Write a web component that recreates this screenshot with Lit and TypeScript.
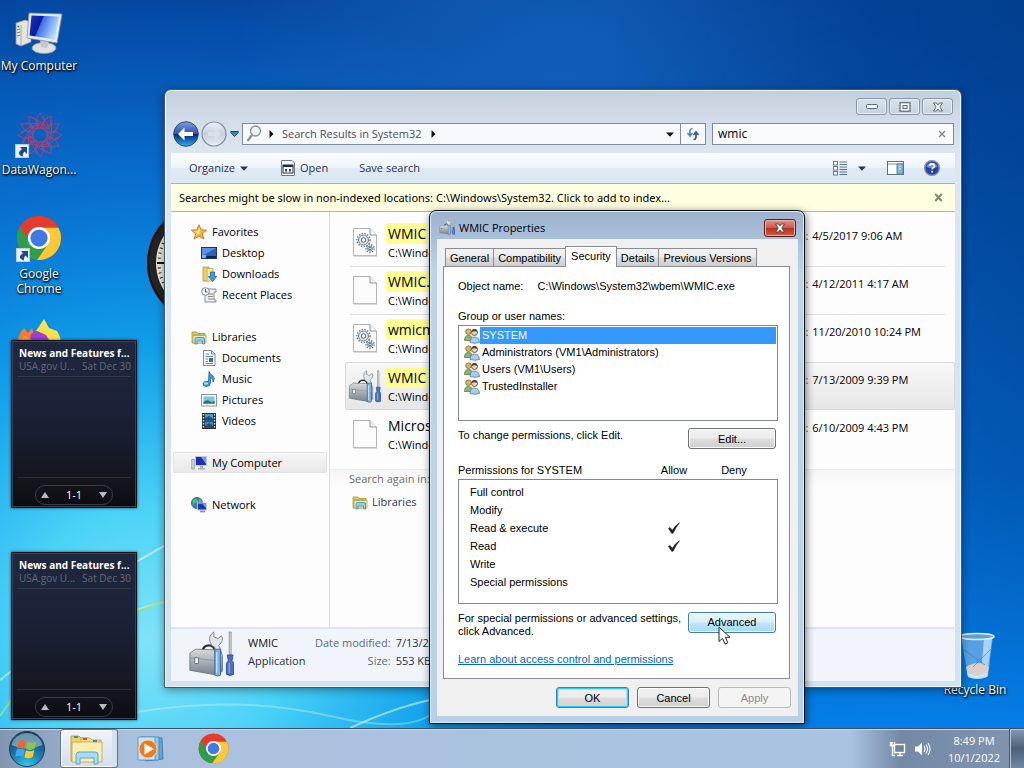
import { LitElement, html, svg, css, nothing } from "lit";
import type { TemplateResult } from "lit";
import { customElement, property } from "lit/decorators.js";
import { classMap } from "lit/directives/class-map.js";

/* ---------- shared styles ---------- */

const base = css`
  * { box-sizing: border-box; }
  :host { font-family: "Open Sans", "Noto Sans", sans-serif; font-size: 11px; line-height: 16px; color: #000; }
  button { font: inherit; color: inherit; padding: 0; margin: 0; border: 0; background: none; }
  input { font: inherit; color: inherit; padding: 0; margin: 0; border: 0; background: none; outline: 0; }
  ul { list-style: none; margin: 0; padding: 0; }
  svg { display: block; flex: none; }
`;

/* ---------- icons ---------- */

const icon = (w: number, h: number, box: string, body: unknown) =>
  html`<svg width=${w} height=${h} viewBox=${box} aria-hidden="true">${body}</svg>`;

const chromeIcon = (s: number) => icon(s, s, "0 0 48 48", svg`
  <circle cx="24" cy="24" r="23" fill="#e33b2e"/>
  <path d="M24 24 4.1 12.5A23 23 0 0 0 22 46.9L34 29.8Z" fill="#2f9e4b"/>
  <path d="M24 13H44.2A23 23 0 0 1 22 46.9L34 29.8Z" fill="#fcc934"/>
  <path d="M4.1 12.5A23 23 0 0 1 44.2 13H24L13.5 26Z" fill="#e33b2e"/>
  <circle cx="24" cy="24" r="11.6" fill="#fff"/><circle cx="24" cy="24" r="9" fill="#3f79e6"/>`);

const computerIcon = icon(48, 48, "0 0 48 48", svg`
  <defs><linearGradient id="scr" x1="0" y1="0" x2="1" y2=".35"><stop offset="0" stop-color="#1a35c8"/><stop offset=".42" stop-color="#0a1a9c"/><stop offset=".46" stop-color="#3f6fe6"/><stop offset="1" stop-color="#b7dcff"/></linearGradient></defs>
  <path d="M1 16 10 13 16 15 16 35 6 39 1 37Z" fill="#e4e4e0" stroke="#8d8f92" stroke-width=".8"/>
  <path d="M6 18V39" stroke="#a9aaa8"/><circle cx="3.4" cy="19.500" r="1" fill="#3b8f3a"/>
  <path d="M2 23 5 22M2 26 5 25M2 29 5 28" stroke="#777"/>
  <ellipse cx="29" cy="41" rx="12" ry="5.500" fill="#dfe1e3" stroke="#8e9296" stroke-width=".8"/>
  <path d="M25 33 34 34 32 41 26 40Z" fill="#c3c8cc"/>
  <path d="M14 6 47 7 42 36 12 31Z" fill="#e9ebec" stroke="#8d9296" stroke-width=".8"/>
  <path d="M16.500 8.500 44 9.500 40 32.500 14.500 28.500Z" fill="url(#scr)"/>`);

const dataWagonIcon = icon(48, 48, "0 0 48 48", svg`
  <g fill="none" stroke="#b8406e" stroke-width=".9" opacity=".9">
  ${Array.from({ length: 12 }, (_, i) => svg`<g transform=${`rotate(${i * 30} 25 24)`}><path d="M25 2 30 11 24 17 21 9Z"/><path d="M18 6 30 14 25 17M27 11 34 18"/></g>`)}
  <circle cx="25" cy="24" r="7"/></g>`);

const firefoxIcon = icon(48, 48, "0 0 48 48", svg`
  <path d="M2 24Q4 14 9 9L13 14 17 9 19 16 32 18 31 34H4Z" fill="#ff7a2a"/>
  <path d="M21 12 29 0 34 9 42 12Q46 18 46 26H34Z" fill="#ffe14a"/>
  <path d="M16 15 22 12 31 16 36 24 14 26Z" fill="#9c3fd6"/>
  <path d="M3 22 10 17 24 25 46 22 42 40H8Z" fill="#ff9f22"/>`);

const binIcon = icon(48, 48, "0 0 48 48", svg`
  <path d="M10 5H42L37 46H17Z" fill="#9cc6ee" fill-opacity=".55"/>
  <path d="M33 8 41 8 36 44 30 42Z" fill="#e2f1fd" fill-opacity=".6"/>
  <path d="M15 36Q27 28 38 36L36 45Q26 49 17 45Z" fill="#d9cfc6"/>
  <path d="M16 41Q26 47 37 41L36 46Q26 50 17 46Z" fill="#c9e2f5"/>
  <path d="M12 18 34 34M40 18 22 36" stroke="#3f78b9" stroke-width="1" opacity=".6"/>
  <ellipse cx="26" cy="5.500" rx="17" ry="3" fill="#5f9fd8" stroke="#d8ecfb" stroke-width="1.600"/>`);

const shortcutArrow = icon(14, 14, "0 0 14 14", svg`
  <rect x=".5" y=".5" width="13" height="13" fill="#e9f2fa" stroke="#b9cde0"/>
  <path d="M5 3H12V10L9.500 7.500Q7.500 9 8 12.500Q3.500 11.500 4 8.500Q4.500 6.500 7 5.200Z" fill="#1f4a8a"/>`);

const toolbox = (w: number, h: number) => icon(w, h, "0 0 48 48", svg`
  <defs><linearGradient id="tb" x1="0" y1="0" x2="0" y2="1"><stop offset="0" stop-color="#d6dbd9"/><stop offset="1" stop-color="#76828a"/></linearGradient></defs>
  <path d="M15 21Q16 15 22 15Q27 15 28 21" fill="none" stroke="#2b2f33" stroke-width="2.200"/>
  <path d="M2 23 8 19 34 20 36 26 36 42 30 46 2 41Z" fill="url(#tb)" stroke="#69747a" stroke-width=".9"/>
  <path d="M2 28 30 31 36 27M30 31V46" fill="none" stroke="#8d979b"/>
  <rect x="7" y="28" width="4" height="6" fill="#eceeee" stroke="#59636a" stroke-width=".8"/>
  <path d="M23 11Q21 5 27 1L27 6 31 8 35 5Q38 10 32 15L34 19V24H28V17Q24 16 23 11Z" fill="#e1e5e7" stroke="#717a81" stroke-width=".9"/>
  <path d="M28 19H34V46Q31 48 28 46Z" fill="#7fb0e2" stroke="#2b5e9c" stroke-width=".9"/><path d="M30 22V44" stroke="#d8ebfb" stroke-width="1.200"/>
  <path d="M43 1H45V25H43Z" fill="#d6dadd" stroke="#7f878c" stroke-width=".8"/>
  <path d="M41 25H47L46 31 48 34V45Q44 48 40 45V34L42 31Z" fill="#4b6fc4" stroke="#26417f" stroke-width=".8"/><path d="M43 33V44" stroke="#a9c0ee"/>`);

const gear = (cx: number, cy: number, r: number) => svg`
  <circle cx=${cx} cy=${cy} r=${r} fill="#dbe6ef" stroke="#6f8193" stroke-width="1"/>
  <circle cx=${cx} cy=${cy} r=${r + 1.5} fill="none" stroke="#66788b" stroke-width="1.500" stroke-dasharray="1.300 1.500"/>
  <circle cx=${cx} cy=${cy} r=${r * 0.45} fill="#fff" stroke="#55677a" stroke-width="1"/>`;

const pageIcon = (gears: boolean) => icon(24, 30, "0 0 24 30", svg`
  <path d="M.5 1.500H17L23.500 8V28.500H.5Z" fill="#fcfcfc" stroke="#b2b5b8"/>
  <path d="M17 1.500V8H23.500" fill="#f2f3f4" stroke="#8f9295"/>
  <path d="M1 29.300H24" stroke="#cfd1d3"/>
  ${gears ? svg`${gear(10.5, 13, 5)}${gear(17, 21.5, 2.5)}` : nothing}`);

const folder = svg`
  <path d="M1 3H6L7 4.500H14V14H1Z" fill="#e8c85e" stroke="#b8922c" stroke-width=".8"/>
  <path d="M2 6H15V14H2Z" fill="#f8e79c" stroke="#c5a443" stroke-width=".8"/>`;
const small: Record<string, TemplateResult> = {
  star: icon(16, 16, "0 0 16 16", svg`<path d="M8 .8 10 5.800 15.500 6.200 11.300 9.700 12.800 15 8 12 3.200 15 4.700 9.700 .5 6.200 6 5.800Z" fill="#fbb63a" stroke="#d9761b"/><path d="M8 3 9.200 7 8 10 4.500 12 5.800 9.300 3 7 6.800 6.800Z" fill="#ffe28a"/>`),
  desktop: icon(16, 16, "0 0 16 16", svg`<rect x=".5" y="2.500" width="15" height="11" fill="#2a63c4" stroke="#16386e"/><path d="M1 3H15L1 11Z" fill="#5b93e2"/><rect x="1" y="11" width="14" height="2" fill="#10264e"/><rect x="1" y="10" width="4" height="3" fill="#72b5ee"/>`),
  downloads: icon(16, 16, "0 0 16 16", svg`<path d="M2 1H8V15H2Z" fill="#edcf70" stroke="#b6922f" stroke-width=".8"/><path d="M6 2.500H12V15H6Z" fill="#f8e9a7" stroke="#c4a346" stroke-width=".8"/><path d="M9.500 6H13.500V10.500H15.700L11.500 15.500 7.300 10.500H9.500Z" fill="#3f9be6" stroke="#1b5fa6" stroke-width=".8"/>`),
  recent: icon(16, 16, "0 0 16 16", svg`<path d="M5 2H15V5H13V13H15V15H4V8" fill="#eceeef" stroke="#8b9196"/><path d="M7 7H12M7 9.500H12M7 12H12" stroke="#7f8a93"/><circle cx="4.500" cy="4.500" r="3.800" fill="#f4f7f9" stroke="#7e868c"/><path d="M4.500 2V5H6.500" fill="none" stroke="#4a545c"/>`),
  libraries: icon(16, 16, "0 0 16 16", svg`${folder}<path d="M2 6H14" stroke="#7fc06a" stroke-width="1.500"/><path d="M4 15V10Q4 8.500 5.500 8.500H12Q13.500 8.500 13.500 10V15H11.500V12H6V15Z" fill="#8fd0ee" stroke="#3e8db8" stroke-width=".8"/>`),
  documents: icon(16, 16, "0 0 16 16", svg`<path d="M2.500 .5H10.500L14 4V15.500H2.500Z" fill="#fbfcfd" stroke="#7c8791"/><path d="M10.500 .5V4H14" fill="none" stroke="#7c8791"/><path d="M4.500 4H8M4.500 6.500H12M4.500 9H7M4.500 11.500H7M4.500 13.500H12" stroke="#5c86b8"/><rect x="8" y="8" width="4" height="4" fill="#2f6cb4"/>`),
  music: icon(16, 16, "0 0 16 16", svg`<path d="M8 .5Q8.500 3 12 5Q14.500 7.500 12 11Q12.500 7 9.500 6.500V12Q9 15.500 5 15.500Q1.500 15 2 12.300Q3 9.800 7.500 10.500Z" fill="#3c9be0" stroke="#1c68ac" stroke-width=".8"/><ellipse cx="5" cy="12.500" rx="2" ry="1.300" fill="#a9dcfa"/>`),
  pictures: icon(16, 16, "0 0 16 16", svg`<rect x=".5" y="2.500" width="15" height="11.500" fill="#fdfdfd" stroke="#8896a3"/><rect x="2.500" y="4.500" width="11" height="7.500" fill="#7ec2ec"/><path d="M2.500 10Q6 7 8.500 9T13.500 8.500V12H2.500Z" fill="#226f74"/><path d="M2.500 11 13.500 10.500V12H2.500Z" fill="#49a34c"/>`),
  videos: icon(16, 16, "0 0 16 16", svg`<rect x="1" y="0" width="14" height="16" fill="#232a33"/><rect x="4" y="1" width="8" height="6.500" fill="#4d9bdc"/><rect x="4" y="8.500" width="8" height="6.500" fill="#3e86c8"/><path d="M4 5 8 3 12 6V7.500H4ZM4 13 8 10 12 13V15H4Z" fill="#1f4f7c"/><path d="M2.500 1V16M13.500 1V16" stroke="#e8edf2" stroke-width="1.400" stroke-dasharray="1.500 1.500"/>`),
  computer: icon(16, 16, "0 0 16 16", svg`<path d="M.8 4.500H3.200V14H.8Z" fill="#dcdedf" stroke="#8a8e91" stroke-width=".8"/><rect x="4.500" y="1.500" width="11" height="9" fill="#1d2fb4" stroke="#c2c9d2"/><path d="M10 2H15V9Z" fill="#6f9bf0"/><path d="M9 11H12V13H14V14.500H7V13H9Z" fill="#a9afb5"/>`),
  network: icon(16, 16, "0 0 16 16", svg`<circle cx="6" cy="6" r="5.500" fill="#2a7fd0" stroke="#164f8c" stroke-width=".8"/><path d="M2 3Q5 1 7 3T4 6 3 9Q1 6 2 3M8 1.500Q11 3 11 5L8 5Z" fill="#5cc05a"/><rect x="6.500" y="6" width="9" height="7" fill="#1d37bd" stroke="#c2cbd6"/><path d="M11 6.500H15V11Z" fill="#6f9bf0"/><path d="M9 14.500H14" stroke="#8d949b" stroke-width="1.800"/>`),
};

const usersIcon = icon(16, 16, "0 0 16 16", svg`
  <circle cx="4.500" cy="3.700" r="2.800" fill="#d9b56b" stroke="#7d6128" stroke-width=".8"/>
  <path d="M.5 12.500Q.5 7.500 4.500 7.500T8.500 12.500Z" fill="#8fb66c" stroke="#57793c" stroke-width=".8"/>
  <circle cx="10.500" cy="4.500" r="3" fill="#ecd2b0" stroke="#4d3a2a" stroke-width=".8"/><path d="M7.500 4Q8 1 10.500 1T13.500 4Q11 2.500 7.500 4Z" fill="#4d3f36"/>
  <path d="M6 14.500Q6 9 10.500 9T15.500 14.500Q11 16 6 14.500Z" fill="#a9cdea" stroke="#4f7ba6" stroke-width=".8"/>`);

const triangle = (color = "#26384f") => icon(8, 5, "0 0 8 5", svg`<path d="M0 .5H8L4 4.800Z" fill=${color}/>`);
const rightTri = icon(5, 8, "0 0 5 8", svg`<path d="M.5 0 4.500 4 .5 8Z" fill="#111"/>`);

/* ---------- desktop icon ---------- */

@customElement("desktop-icon")
class DesktopIcon extends LitElement {
  @property() label = "";
  @property({ attribute: false }) picture: unknown = nothing;
  @property({ type: Boolean }) shortcut = false;
  static styles = [base, css`
    :host { display: block; width: 78px; height: 104px; }
    .item { display: flex; flex-direction: column; align-items: center; gap: 3px; width: 100%; color: #fff; line-height: 15px; font-size: 12px; padding: 7px 0 0; text-shadow: 1px 1px 2px #000, 0 1px 2px #000; }
    .art { position: relative; display: block; height: 48px; }
    .arrow { position: absolute; left: 0; bottom: 1px; }
  `];
  render() {
    return html`<button class="item">
      <span class="art">${this.picture}${this.shortcut ? html`<span class="arrow">${shortcutArrow}</span>` : nothing}</span>
      <span>${this.label}</span>
    </button>`;
  }
}

/* ---------- news gadget ---------- */

@customElement("news-gadget")
class NewsGadget extends LitElement {
  static styles = [base, css`
    :host { display: block; color: #fff; }
    .card { width: 126px; height: 168px; display: flex; flex-direction: column; border: 1px solid #0b0d12; box-shadow: inset 0 0 0 1px #3a4254, 0 0 3px #0009; background: linear-gradient(#202840, #1a2136 45%, #14151c 85%, #0c0c10); padding: 4px 5px 2px; }
    .title { font-weight: 700; line-height: 16px; font-size: 10px; padding-left: 2px; white-space: nowrap; }
    .meta { display: flex; justify-content: space-between; line-height: 10px; font-size: 10px; color: #646a7a; padding: 0 0 5px 2px; border-bottom: 1px solid #343b4c; white-space: nowrap; }
    .space { flex: 1; border-bottom: 1px solid #2a2c34; margin-bottom: 7px; }
    .pager { display: flex; align-items: center; justify-content: space-between; align-self: center; width: 78px; height: 20px; border: 1px solid #3b3d44; border-radius: 10px; padding: 0 5px; }
    .pager button { width: 8px; height: 16px; display: grid; place-items: center; }
  `];
  render() {
    return html`<section class="card">
      <div class="title">News and Features f...</div>
      <div class="meta"><span>USA.gov U...</span><span>Sat Dec 30</span></div>
      <div class="space"></div>
      <div class="pager">
        <button aria-label="Previous">${icon(8, 6, "0 0 8 6", svg`<path d="M4 0 8 6H0Z" fill="#b9bbc0"/>`)}</button>
        <span>1-1</span>
        <button aria-label="Next">${icon(8, 6, "0 0 8 6", svg`<path d="M0 0H8L4 6Z" fill="#b9bbc0"/>`)}</button>
      </div>
    </section>`;
  }
}

/* ---------- explorer window ---------- */

interface FileRow { kind: "gears" | "page" | "app"; hit: string; rest: string; path: string; date: string; selected?: boolean }
const files: FileRow[] = [
  { kind: "gears", hit: "WMIC", rest: "", path: "C:\\Windo", date: "4/5/2017 9:06 AM" },
  { kind: "page", hit: "WMIC", rest: ".", path: "C:\\Windo", date: "4/12/2011 4:17 AM" },
  { kind: "gears", hit: "wmic", rest: "m", path: "C:\\Windo", date: "11/20/2010 10:24 PM" },
  { kind: "app", hit: "WMIC", rest: "", path: "C:\\Windo", date: "7/13/2009 9:39 PM", selected: true },
  { kind: "page", hit: "", rest: "Microso", path: "C:\\Windo", date: "6/10/2009 4:43 PM" },
];
const places: [string, string, boolean][][] = [
  [["star", "Favorites", false], ["desktop", "Desktop", true], ["downloads", "Downloads", true], ["recent", "Recent Places", true]],
  [["libraries", "Libraries", false], ["documents", "Documents", true], ["music", "Music", true], ["pictures", "Pictures", true], ["videos", "Videos", true]],
  [["computer", "My Computer", false]],
  [["network", "Network", false]],
];

@customElement("explorer-window")
class ExplorerWindow extends LitElement {
  static styles = [base, css`
    :host { display: flex; flex-direction: column; border: 1px solid #46586c; border-radius: 7px 7px 0 0; padding: 0 6px 6px; background: linear-gradient(#c3cedb, #d3dde9 30px, #dbe6f0 64px, #d3e2ef 100%); box-shadow: inset 0 0 0 1px #eef4fa, 0 2px 8px #0006; }
    .caption { display: flex; justify-content: flex-end; gap: 2px; padding: 8px 2px 0; height: 33px; }
    .caption button { width: 31px; height: 17px; border: 1px solid #8797a9; border-radius: 3px; background: linear-gradient(#d9e2ec, #c6d2df); display: grid; place-items: center; box-shadow: inset 0 0 0 1px #e6edf4; }
    .nav { display: flex; align-items: center; height: 22px; margin-bottom: 8px; padding-right: 1px; }
    .nav .drop { width: 15px; display: grid; place-items: center; }
    .address { flex: 1; display: flex; align-items: center; height: 22px; border: 1px solid #7e8b9b; background: #f6f9fd; color: #4b4f56; font-size: 11px; }
    .address .lens { padding: 0 7px 0 3px; }
    .address .crumb { padding: 0 10px 0 8px; }
    .address .fill { flex: 1; }
    .address .menu { width: 20px; height: 20px; display: grid; place-items: center; }
    .address .refresh { width: 25px; height: 20px; display: grid; place-items: center; border-left: 1px solid #7e8b9b; }
    .search { display: flex; align-items: center; width: 242px; height: 22px; border: 1px solid #7e8b9b; background: #f8fafd; margin-left: 6px; padding: 0 7px 0 5px; }
    .search input { flex: 1; min-width: 0; font-size: 12px; }
    .tools { display: flex; align-items: center; height: 31px; padding: 0 15px 0 18px; color: #1f3347; background: linear-gradient(#fbfdff, #eef4fb 48%, #dfe9f6 52%, #dde8f5 100%); border-bottom: 1px solid #a3b1c1; }
    .tools button { display: flex; align-items: center; gap: 5px; }
    .tools .open { margin-left: 33px; }
    .tools .save { margin-left: 31px; }
    .tools .views { margin-left: auto; gap: 11px; }
    .tools .pane { margin-left: 21px; }
    .tools .help { margin-left: 20px; }
    .notice { display: flex; align-items: center; justify-content: space-between; height: 28px; padding: 0 12px 0 8px; background: #fffee0; border-bottom: 1px solid #b8b896; font-family: "Noto Sans", sans-serif; }
    .main { flex: 1; min-height: 0; display: flex; background: #fdfdfe; }
    .places { width: 159px; border-right: 1px solid #d5dfe9; padding: 9px 2px 0 2px; display: flex; flex-direction: column; gap: 21px; }
    .places a { display: flex; align-items: center; gap: 5px; height: 21px; padding-left: 18px; color: #000; text-decoration: none; }
    .places a.sub { padding-left: 28px; }
    .places a.on { background: linear-gradient(#f8f8f8, #e7e7e7); border-radius: 2px; box-shadow: inset 0 0 0 1px #e2e2e2; }
    .results { flex: 1; min-width: 0; padding: 6px 0 0; display: flex; flex-direction: column; }
    .row { display: flex; height: 48px; margin-left: 15px; padding-left: 5px; align-items: flex-start; position: relative; border: 1px solid transparent; }
    .row.line::after { content: ""; position: absolute; left: 4px; right: 9px; bottom: -2px; height: 1px; background: #dcdcdc; }
    .row.on { background: linear-gradient(#f8f8f8, #e6e6e6); border-color: #d9d9d9; border-radius: 2px; }
    .row .art { width: 27px; height: 46px; display: grid; place-items: center; }
    .row.on .art { margin: 0 -3px; width: 33px; }
    .row .text { margin-left: 8px; flex: 1; min-width: 0; }
    .row .name { display: block; font-size: 14px; line-height: 21px; height: 21px; padding: 0 2px; margin-top: 4px; width: max-content; border-radius: 3px; }
    .row .name.hit { background: #ffff94; }
    .row .path { display: block; line-height: 17px; padding: 0 2px; }
    .row .date { display: flex; gap: 4px; padding-top: 9px; width: 194px; }
    .row .date .k { color: #44586c; }
    .again { border-top: 1px solid #ededed; background: linear-gradient(#f6f6f6, #fdfdfe 20px); margin-top: 11px; padding: 1px 19px; color: #6d6d6d; }
    .again a { display: flex; align-items: center; gap: 4px; margin: 7px 3px; color: #1e395b; text-decoration: none; }
    .details { display: flex; height: 54px; background: #f1f5fb; border-top: 2px solid #dde4ed; padding-left: 17px; }
    .details .art { padding-top: 2px; width: 48px; }
    .details dl { margin: 5px 0 0; display: grid; grid-template-columns: auto auto auto; line-height: 18px; height: 36px; color: #5a6a7e; column-gap: 5px; margin-left: 12px; }
    .details .t { grid-column: 1; width: 62px; margin: 0; white-space: nowrap; }
    .details .main-name { color: #111; }
    .details dt { text-align: right; }
    .details dd { margin: 0; color: #1e2f44; }
  `];
  private row(f: FileRow, i: number) {
    const art = f.kind === "app" ? toolbox(33, 33) : pageIcon(f.kind === "gears");
    return html`<li class=${classMap({ row: true, on: !!f.selected, line: i < 2 })}>
      <span class="art">${art}</span>
      <span class="text"><span class=${classMap({ name: true, hit: f.hit !== "" })}>${f.hit}${f.rest}</span><span class="path">${f.path}</span></span>
      <span class="date"><span class="k">Modified:</span><span>${f.date}</span></span>
    </li>`;
  }
  render() {
    return html`
      <header class="caption">
        <button aria-label="Minimize">${icon(12, 6, "0 0 12 6", svg`<rect x=".5" y=".5" width="11" height="4" rx="1" fill="#fff" stroke="#56687b"/>`)}</button>
        <button aria-label="Maximize">${icon(12, 10, "0 0 12 10", svg`<rect x="1" y=".7" width="10" height="8.500" fill="#fff" stroke="#56687b" stroke-width="1.200"/><rect x="4" y="3.500" width="4" height="3" fill="none" stroke="#56687b"/>`)}</button>
        <button aria-label="Close">${icon(12, 10, "0 0 12 10", svg`<path d="M2 1H4.500L6 3 7.500 1H10.500L7.800 5 10.500 9H7.500L6 7 4.500 9H1.500L4.200 5 1.500 1Z" fill="#fff" stroke="#56687b"/>`)}</button>
      </header>
      <div class="nav">
        <button aria-label="Back">${icon(28, 28, "0 0 28 28", svg`
          <defs><linearGradient id="bk" x1="0" y1="0" x2="0" y2="1"><stop offset="0" stop-color="#7d9fdc"/><stop offset=".48" stop-color="#2a55b4"/><stop offset=".5" stop-color="#06206f"/><stop offset="1" stop-color="#2bb4f0"/></linearGradient></defs>
          <circle cx="15" cy="14" r="12.300" fill="url(#bk)" stroke="#34486e"/><path d="M7 14 13.500 7.500V12H22V16H13.500V20.500Z" fill="#fff"/>`)}</button>
        <button aria-label="Forward">${icon(28, 28, "0 0 28 28", svg`
          <defs><linearGradient id="fw" x1="0" y1="0" x2="0" y2="1"><stop offset="0" stop-color="#eef3f8"/><stop offset=".5" stop-color="#c6d0dc"/><stop offset="1" stop-color="#e6eef6"/></linearGradient></defs>
          <circle cx="15" cy="14" r="12" fill="url(#fw)" stroke="#8190a2" stroke-width="1.200"/><path d="M22 14 16 8.500V12H9V16H16V19.500Z" fill="#d9e1ea"/>`)}</button>
        <button class="drop" aria-label="Recent pages">${icon(9, 6, "0 0 9 6", svg`<path d="M.8 .5H8.200V1.500L4.500 5.500.8 1.500Z" fill="#3a8fa8" stroke="#24435e"/>`)}</button>
        <div class="address">
          <span class="lens">${icon(16, 18, "0 0 16 18", svg`<circle cx="9.500" cy="6" r="5" fill="#e9f3f9" stroke="#8a9196" stroke-width="1.300"/><path d="M6 10 1.500 16" stroke="#8a9196" stroke-width="2.200"/>`)}</span>
          ${rightTri}<span class="crumb">Search Results in System32</span>${rightTri}
          <span class="fill"></span>
          <button class="menu" aria-label="Previous locations">${triangle("#111")}</button>
          <button class="refresh" aria-label="Refresh">${icon(14, 14, "0 0 14 14", svg`<path d="M4 8V3.500Q4.500 1.500 6.500 1.500M1.500 6 4 9 6.500 6" fill="none" stroke="#4a8bbd" stroke-width="1.600"/><path d="M10 6V10.500Q9.500 12.500 7.500 12.500M7.500 8 10 5 12.500 8" fill="none" stroke="#33568c" stroke-width="1.600"/>`)}</button>
        </div>
        <div class="search">
          <input type="text" aria-label="Search System32" value="wmic">
          <button aria-label="Clear search">${icon(8, 8, "0 0 8 8", svg`<path d="M1 1 7 7M7 1 1 7" stroke="#7c8286" stroke-width="1.300"/>`)}</button>
        </div>
      </div>
      <div class="tools">
        <button>Organize ${triangle()}</button>
        <button class="open">${icon(14, 16, "0 0 14 16", svg`<path d="M.5 .5H11L13.500 3V15.500H.5Z" fill="#fbfbfb" stroke="#70777e"/><rect x="2" y="5" width="10" height="8" fill="#fff" stroke="#182a5c"/><path d="M2 6H12" stroke="#182a5c" stroke-width="2"/><path d="M4 9H6V11.500H4ZM8 9H10V11.500H8Z" fill="#33436e"/>`)}Open</button>
        <button class="save">Save search</button>
        <button class="views" aria-label="Change your view">${icon(14, 15, "0 0 14 15", svg`<g fill="#fff" stroke="#6c7784"><rect x=".5" y=".5" width="4" height="3.500"/><rect x=".5" y="5.500" width="4" height="3.500"/><rect x=".5" y="10.500" width="4" height="3.500"/></g><path d="M6.500 1H14M6.500 3.500H14M6.500 6H14M6.500 8.500H14M6.500 11H14M6.500 13.500H14" stroke="#587087"/>`)}${triangle("#26384f")}</button>
        <button class="pane" aria-label="Show the preview pane">${icon(17, 14, "0 0 17 14", svg`<rect x=".5" y=".5" width="16" height="13" fill="#fdfeff" stroke="#5a6f86"/><path d="M1 3H16" stroke="#7d8fa3"/><rect x="10" y="3" width="6" height="10" fill="#7cc0d6" stroke="#5a7f9c"/><path d="M12 5H14M12 8H14" stroke="#d9f1f8"/>`)}</button>
        <button class="help" aria-label="Get help">${icon(16, 16, "0 0 16 16", svg`<circle cx="8" cy="8" r="7.300" fill="#23439f" stroke="#7f8ba5" stroke-width="1.400"/><path d="M2.500 7A5.700 5.700 0 0 1 13.500 7Q8 9 2.500 7Z" fill="#6f8fdd"/><path d="M5.700 6Q5.800 3.800 8 3.800T10.300 6Q10.300 7 8.900 7.900Q8.200 8.300 8.200 9.300M8.200 10.800V12.500" fill="none" stroke="#fff" stroke-width="1.700"/>`)}</button>
      </div>
      <div class="notice">
        <span>Searches might be slow in non-indexed locations: C:\\Windows\\System32. Click to add to index...</span>
        <button aria-label="Dismiss">${icon(9, 9, "0 0 9 9", svg`<path d="M1.200 1 7.800 8M7.800 1 1.200 8" stroke="#85866f" stroke-width="2"/>`)}</button>
      </div>
      <div class="main">
        <nav class="places">
          ${places.map((g) => html`<div>${g.map(([k, label, sub]) => html`<a href="#" class=${classMap({ sub, on: k === "computer" })}>${small[k]}${label}</a>`)}</div>`)}
        </nav>
        <div class="results">
          <ul>${files.map((f, i) => this.row(f, i))}</ul>
          <div class="again">Search again in:<a href="#">${small.libraries}Libraries</a></div>
        </div>
      </div>
      <footer class="details">
        <span class="art">${toolbox(46, 46)}</span>
        <dl>
          <dd class="t main-name">WMIC</dd><dt>Date modified:</dt><dd>7/13/2009</dd>
          <dd class="t">Application</dd><dt>Size:</dt><dd>553 KB</dd>
        </dl>
      </footer>`;
  }
}

/* ---------- properties dialog ---------- */

const tabs = ["General", "Compatibility", "Security", "Details", "Previous Versions"];
const principals = ["SYSTEM", "Administrators (VM1\\Administrators)", "Users (VM1\\Users)", "TrustedInstaller"];
const permissions: [string, boolean][] = [
  ["Full control", false], ["Modify", false], ["Read & execute", true], ["Read", true], ["Write", false], ["Special permissions", false],
];

@customElement("properties-dialog")
class PropertiesDialog extends LitElement {
  static styles = [base, css`
    :host { display: block; width: 376px; border: 1px solid #0d1116; border-radius: 7px 7px 0 0; padding: 0 6px 7px 7px; background: linear-gradient(#9cb2cd, #a9c0db 28px, #bcd3ea 60px, #b9d1e8 100%); box-shadow: inset 0 0 0 1px #dcebf8, 1px 2px 8px #0008; font-family: "Liberation Sans", Arial, sans-serif; line-height: 14px; }
    .title { display: flex; align-items: flex-start; height: 28px; padding: 8px 2px 0 2px; }
    .title h1 { font: 11px/18px "Open Sans", sans-serif; margin: 0 0 0 4px; flex: 1; }
    .close { width: 32px; height: 18px; display: grid; place-items: center; border: 1px solid #5c1d1a; border-radius: 3px; background: linear-gradient(#dd9187, #cf5b4c 48%, #b9301f 52%, #cf5c45); box-shadow: inset 0 0 0 1px #f0b2a6; }
    .body { background: #f0f0f0; padding: 7px 7px 8px 6px; }
    .tabs { display: flex; align-items: flex-end; height: 20px; padding-left: 2px; }
    .tabs button { height: 18px; padding: 0 4px; line-height: 18px; border: 1px solid #898c95; border-bottom: 0; margin-left: -1px; background: linear-gradient(#f3f3f3, #ebebeb 48%, #dddddd 52%, #cfcfcf); }
    .tabs button:first-child { margin-left: 0; }
    .tabs button.on { height: 21px; margin-bottom: -1px; background: #fff; padding: 0 5px 2px; position: relative; }
    .page { background: #fff; border: 1px solid #898c95; padding: 12px 11px 12px 14px; margin-right: 1px; }
    .object { display: flex; gap: 14px; margin: 0 0 16px; }
    .object dd { margin: 0; }
    .list { margin-top: 2px; height: 96px; border: 1px solid #828790; padding: 1px 1px 0; }
    .list li { display: flex; align-items: center; height: 17px; padding-left: 4px; }
    .list li span { flex: 1; line-height: 17px; padding-left: 2px; }
    .list li.on span { background: #3399ff; color: #fff; }
    .line { display: flex; justify-content: space-between; align-items: flex-start; padding-right: 2px; }
    .edit { padding-top: 7px; }
    .push { height: 21px; border: 1px solid #707070; border-radius: 3px; background: linear-gradient(#f2f2f2, #ebebeb 48%, #dddddd 52%, #cfcfcf); box-shadow: inset 0 0 0 1px #fcfcfc; }
    .wide { width: 88px; flex: none; }
    .hot { position: relative; border-color: #3c7fb1; background: linear-gradient(#eaf6fd, #d9f0fc 48%, #bee6fd 52%, #a7d9f5); }
    .cursor { position: absolute; left: 29px; top: 13px; }
    table { width: 100%; border-spacing: 0; margin-top: 14px; table-layout: fixed; }
    th { font-weight: 400; padding: 0 0 2px; text-align: center; line-height: 14px; border-bottom: 1px solid #828790; }
    th:first-child, td:first-child { text-align: left; }
    .c2 { width: 60px; } .c3 { width: 74px; }
    th:last-child { padding-right: 14px; }
    tbody th { padding: 0 0 0 11px; height: 18px; border: 0; border-left: 1px solid #828790; }
    td { padding: 0; height: 18px; }
    td svg { margin: 0 auto; }
    td:last-child { border-right: 1px solid #828790; }
    tbody tr:first-child > * { padding-top: 3px; height: 21px; }
    tbody tr:last-child > * { padding-bottom: 12px; height: 31px; border-bottom: 1px solid #828790; }
    .adv { padding-top: 8px; line-height: 13px; margin-bottom: 14px; }
    .adv p { margin: 0; width: 228px; }
    .page a { color: #0066cc; display: block; width: max-content; }
    .actions { display: flex; justify-content: flex-end; gap: 8px; padding-top: 8px; }
    .actions button { width: 73px; }
    .ok { border-color: #3c7fb1; box-shadow: inset 0 0 0 1px #2fc9f4, inset 0 0 0 2px #a6e6fb; }
    .off { color: #8c8c8c; border-color: #b9b9b9; background: #f4f4f4; box-shadow: none; }
  `];
  render() {
    const check = icon(12, 12, "0 0 12 12", svg`<path d="M.5 6.500 2 5.500 4.300 8.300Q7.500 3 11.500 .8Q8 5 5 11.300H3.700Z" fill="#222" stroke="#222" stroke-width=".6"/>`);
    return html`
      <header class="title">${toolbox(16, 16)}<h1>WMIC Properties</h1>
        <button class="close" aria-label="Close">${icon(12, 10, "0 0 12 10", svg`<path d="M1.500 1H4.500L6 3 7.500 1H10.500L7.800 5 10.500 9H7.500L6 7 4.500 9H1.500L4.200 5Z" fill="#fff" stroke="#5d3531" stroke-width=".9"/>`)}</button>
      </header>
      <div class="body">
        <div class="tabs" role="tablist">
          ${tabs.map((t) => html`<button role="tab" aria-selected=${t === "Security" ? "true" : "false"} class=${classMap({ on: t === "Security" })}>${t}</button>`)}
        </div>
        <section class="page">
          <dl class="object"><dt>Object name:</dt><dd>C:\\Windows\\System32\\wbem\\WMIC.exe</dd></dl>
          <div id="groups">Group or user names:</div>
          <ul class="list" role="listbox" aria-labelledby="groups">
            ${principals.map((p, i) => html`<li role="option" aria-selected=${i === 0 ? "true" : "false"} class=${classMap({ on: i === 0 })}>${usersIcon}<span>${p}</span></li>`)}
          </ul>
          <div class="line edit"><span>To change permissions, click Edit.</span><button class="push wide">Edit...</button></div>
          <table>
            <colgroup><col><col class="c2"><col class="c3"></colgroup>
            <thead><tr><th scope="col">Permissions for SYSTEM</th><th scope="col">Allow</th><th scope="col">Deny</th></tr></thead>
            <tbody>${permissions.map(([name, allow]) => html`<tr><th scope="row">${name}</th><td>${allow ? check : nothing}</td><td></td></tr>`)}</tbody>
          </table>
          <div class="line adv"><p>For special permissions or advanced settings, click Advanced.</p>
            <button class="push wide hot">Advanced
              <span class="cursor">${icon(15, 20, "0 0 15 20", svg`<path d="M1 1V15.500L4.500 12.300 7 18 9.800 16.800 7.400 11.300H12Z" fill="#fff" stroke="#222"/>`)}</span>
            </button>
          </div>
          <a href="#">Learn about access control and permissions</a>
        </section>
        <div class="actions">
          <button class="push ok">OK</button><button class="push">Cancel</button><button class="push off" disabled>Apply</button>
        </div>
      </div>`;
  }
}

/* ---------- taskbar ---------- */

@customElement("task-bar")
class TaskBar extends LitElement {
  static styles = [base, css`
    :host { display: flex; align-items: stretch; height: 40px; border-top: 1px solid #3a4f68; box-shadow: inset 0 1px 0 #c5d6e8; background: linear-gradient(90deg, #8296b2, #93a8c4 55px, #a9c1dd 130px, #a9c3e0 83%, #7389a6 88%, #8195b1 100%); }
    .start { width: 54px; display: grid; place-items: center; }
    .app { width: 48px; display: grid; place-items: center; }
    .open { width: 54px; margin-left: 6px; border: 1px solid #5f7590; border-radius: 3px; background: linear-gradient(#f0f4f9, #d3dfec); box-shadow: inset 0 0 0 1px #fff; margin-right: 5px; position: relative; }
    .open::after { content: ""; position: absolute; top: -1px; bottom: -1px; right: -5px; width: 5px; border: 1px solid #5f7590; border-left: 0; border-radius: 0 3px 3px 0; background: #d6e1ee; }
    .player { width: 62px; }
    .chrome { width: 64px; }
    .tray { margin-left: auto; display: flex; align-items: center; gap: 8px; }
    .clock { color: #fff; text-align: center; line-height: 17px; width: 70px; }
    .peek { align-self: stretch; width: 15px; border-left: 1px solid #46586f; background: linear-gradient(#8799b0, #4e6079 50%, #7186a2); box-shadow: inset 1px 1px 0 #b4c4d6; }
  `];
  render() {
    return html`
      <button class="start" aria-label="Start">${icon(38, 38, "0 0 38 38", svg`
        <defs><radialGradient id="orb" cx=".5" cy="1" r="1"><stop offset="0" stop-color="#35d0e8"/><stop offset=".45" stop-color="#1d7fb0"/><stop offset="1" stop-color="#123a63"/></radialGradient></defs>
        <circle cx="19" cy="19" r="17.500" fill="url(#orb)" stroke="#1d3d5c"/>
        <path d="M3.500 15A16 16 0 0 1 34.500 15Q19 22 3.500 15Z" fill="#c8e0ee" fill-opacity=".5"/>
        <path d="M10.500 11.500Q14.500 9 18.500 11.500L17 18.500Q13 16.500 9 18.500Z" fill="#f0652a"/>
        <path d="M19.800 12Q24 14 28 11.500L26.500 18.500Q22.500 21 18.300 19Z" fill="#8cc63e"/>
        <path d="M8.600 19.800Q12.800 17.500 16.700 20L15.200 27Q11.500 24.500 7.200 27Z" fill="#3fa9f0"/>
        <path d="M18 20.300Q22 22.500 26.300 20L24.700 27Q20.500 29.500 16.400 27.300Z" fill="#fdc92e"/>`)}</button>
      <button class="app open" aria-label="Windows Explorer">${icon(34, 32, "0 0 34 32", svg`
        <path d="M1 3H9L11 5H18V28H1Z" fill="#eed173" stroke="#b9963a" stroke-width=".8"/><path d="M11 5H20L22 7H31V28H11Z" fill="#f6e197" stroke="#bd9b40" stroke-width=".8"/>
        <path d="M2 9H32V29H2Z" fill="#fbeeb0" stroke="#c2a24b" stroke-width=".8"/><path d="M4 3H8V5H4Z" fill="#43a047"/><path d="M13 5H17V7H13Z" fill="#d84a35"/><path d="M23 7H27V9H23Z" fill="#3c86d6"/>
        <path d="M6 31V22Q6 19 9 19H25Q28 19 28 22V31H24V25H10V31Z" fill="#a6dcf4" stroke="#4c9fc9" stroke-width=".9"/>`)}</button>
      <button class="app player" aria-label="Windows Media Player">${icon(28, 28, "0 0 28 28", svg`
        <path d="M8 3 26 3 27 24 10 26Z" fill="#5fa5d8" stroke="#3578ab" stroke-width=".8"/><path d="M5 2H23V25H5Z" fill="#8fc8ec" stroke="#3c83b6" stroke-width=".8"/><path d="M2 2H19V25H2Z" fill="#c7e5f7" stroke="#4f93c2" stroke-width=".8"/>
        <circle cx="12" cy="14" r="9" fill="#f07a1d" stroke="#fbd0a0"/><path d="M8.500 8.500 18 14 8.500 19.500Z" fill="#fff"/>`)}</button>
      <button class="app chrome" aria-label="Google Chrome">${chromeIcon(31)}</button>
      <div class="tray">
        ${icon(17, 16, "0 0 17 16", svg`<rect x="5.500" y="3.500" width="10" height="8" fill="#6d829d" stroke="#fff" stroke-width="1.400"/><path d="M8 14.500H14M11 12V14" stroke="#fff" stroke-width="1.500"/><path d="M1.500 1V4.500H6M3 1V4M5.500 1V5M3.500 5V14.500H6" fill="none" stroke="#fff" stroke-width="1.400"/>`)}
        ${icon(17, 16, "0 0 17 16", svg`<path d="M1 5.500H4L8 1.500V14.500L4 10.500H1Z" fill="#fff"/><path d="M10 5Q12 8 10 11M12 3.500Q15 8 12 12.500M14 2Q18 8 14 14" fill="none" stroke="#fff" stroke-width="1.100"/>`)}
        <div class="clock">8:49 PM<br>10/1/2022</div>
      </div>
      <button class="peek" aria-label="Show desktop"></button>`;
  }
}

/* ---------- desktop ---------- */

@customElement("app-root")
class AppRoot extends LitElement {
  static styles = [base, css`
    :host { display: flex; flex-direction: column; height: 100vh; overflow: hidden; }
    .desktop { flex: 1; min-height: 0; position: relative; overflow: hidden; background: #0a62c8; }
    .paper { position: absolute; inset: 0; width: 100%; height: 100%; }
    .icons { position: relative; display: flex; flex-direction: column; width: max-content; }
    .bin { position: absolute; right: 10px; bottom: 0; }
    .clock { position: absolute; left: 147px; top: 203px; }
    .gadgets { position: absolute; left: 11px; top: 340px; display: flex; flex-direction: column; gap: 44px; }
    explorer-window { position: absolute; left: 164px; top: 89px; right: 62px; bottom: 40px; }
    properties-dialog { position: absolute; left: 429px; top: 210px; }
  `];
  render() {
    return html`
      <main class="desktop">
        <svg class="paper" viewBox="0 0 1024 728" preserveAspectRatio="none" aria-hidden="true">
          <defs>
            <linearGradient id="sky" x1="0" y1="0" x2="0" y2="1"><stop offset="0" stop-color="#04469f"/><stop offset=".4" stop-color="#0560c2"/><stop offset="1" stop-color="#047fe8"/></linearGradient>
            <radialGradient id="glow" gradientUnits="userSpaceOnUse" cx="150" cy="640" r="660"><stop offset="0" stop-color="#7fe3f8"/><stop offset=".2" stop-color="#4bd2f7"/><stop offset=".45" stop-color="#10a4ec" stop-opacity=".9"/><stop offset=".7" stop-color="#0a7fe0" stop-opacity=".55"/><stop offset="1" stop-color="#0a6fd4" stop-opacity="0"/></radialGradient>
            <linearGradient id="dark" x1="0" y1="0" x2="1" y2="0"><stop offset=".6" stop-color="#003a86" stop-opacity="0"/><stop offset="1" stop-color="#003c88" stop-opacity=".7"/></linearGradient>
            <linearGradient id="fade" x1="0" y1="0" x2="0" y2="1"><stop offset="0" stop-color="#fff"/><stop offset=".65" stop-color="#fff" stop-opacity=".6"/><stop offset="1" stop-color="#fff" stop-opacity="0"/></linearGradient>
            <mask id="m"><rect width="1024" height="728" fill="url(#fade)"/></mask>
            <radialGradient id="top" gradientUnits="userSpaceOnUse" cx="560" cy="60" r="320"><stop offset="0" stop-color="#1668c4" stop-opacity=".6"/><stop offset="1" stop-color="#2a78cc" stop-opacity="0"/></radialGradient>
          </defs>
          <rect width="1024" height="728" fill="url(#sky)"/>
          <rect width="1024" height="728" fill="url(#top)"/>
          <rect width="1024" height="728" fill="url(#dark)" mask="url(#m)"/>
          <rect width="1024" height="728" fill="url(#glow)"/>
          <g fill="none" stroke="#d9f8ff">
            <path d="M136 562 164 546" stroke-width="2" opacity=".8"/><path d="M0 680Q60 630 170 600" opacity=".6" stroke-width="2"/>
            <path d="M136 712Q240 695 330 716T440 705" opacity=".35" stroke-width="2"/><path d="M350 728Q400 705 440 698" opacity=".6" stroke-width="2"/>
            <path d="M0 716 14 696M136 612 164 601" stroke="#9be36a" stroke-width="2" opacity=".8"/>
          </g>
        </svg>
        <div class="icons">
          <desktop-icon label="My Computer" .picture=${computerIcon}></desktop-icon>
          <desktop-icon label="DataWagon..." shortcut .picture=${dataWagonIcon}></desktop-icon>
          <desktop-icon label="Google Chrome" shortcut .picture=${chromeIcon(46)}></desktop-icon>
          <desktop-icon .picture=${firefoxIcon}></desktop-icon>
        </div>
        <desktop-icon class="bin" label="Recycle Bin" .picture=${binIcon}></desktop-icon>
        <svg class="clock" width="120" height="120" viewBox="0 0 120 120" aria-hidden="true">
          <circle cx="60" cy="60" r="59" fill="#262322" stroke="#0f0e0e" stroke-width="2"/><circle cx="60" cy="60" r="51" fill="#e9e6d6"/>
          <circle cx="60" cy="60" r="48" fill="none" stroke="#222" stroke-width="3" stroke-dasharray="1 4"/><path d="M10 60H17" stroke="#111" stroke-width="2"/>
        </svg>
        <div class="gadgets"><news-gadget></news-gadget><news-gadget></news-gadget></div>
        <explorer-window></explorer-window>
        <properties-dialog></properties-dialog>
      </main>
      <task-bar></task-bar>`;
  }
}
